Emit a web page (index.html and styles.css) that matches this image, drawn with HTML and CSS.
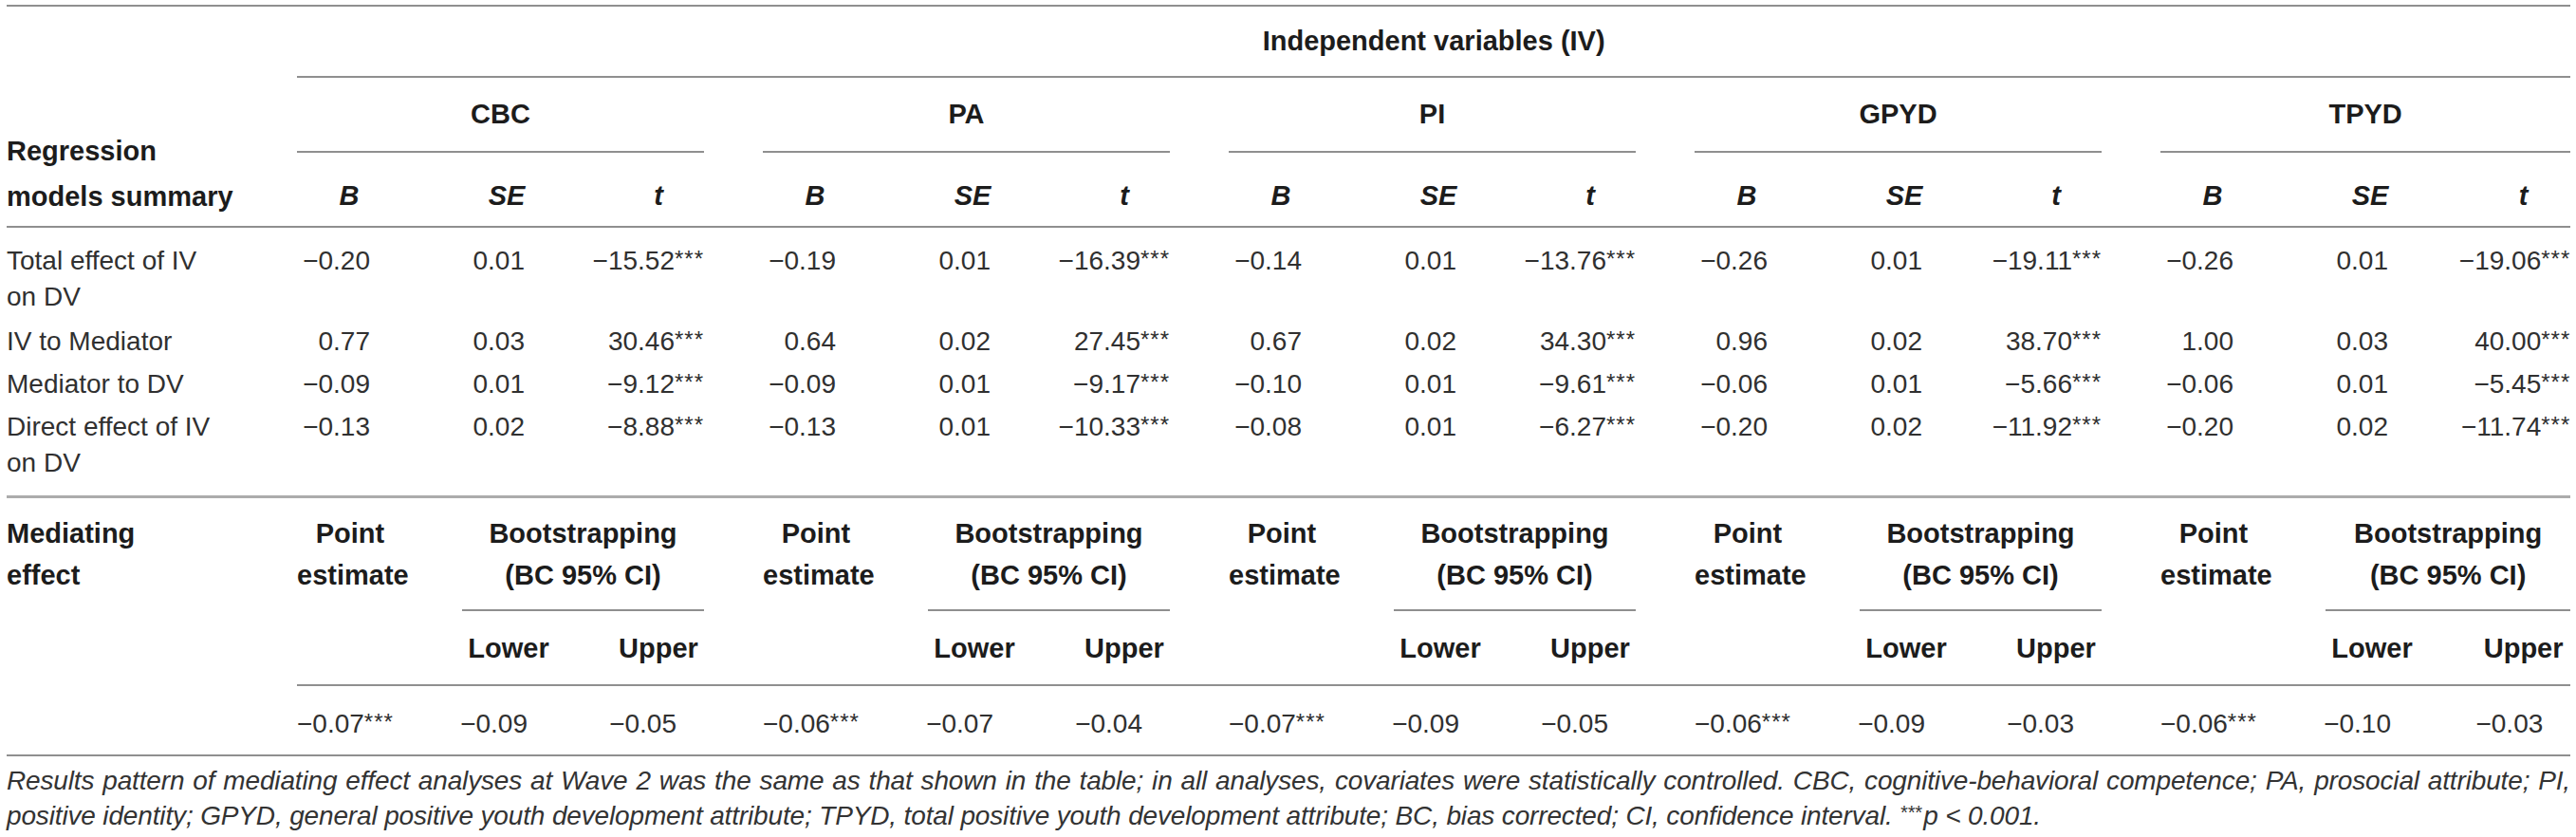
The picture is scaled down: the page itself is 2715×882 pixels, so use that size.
FILE: index.html
```html
<!DOCTYPE html>
<html lang="en">
<head>
  <meta charset="UTF-8">
  <meta name="viewport" content="width=device-width, initial-scale=1.0">
  <title>Mediating effect analyses</title>
  <link rel="stylesheet" href="styles.css">
</head>
<body>
  <table class="results">
    <colgroup>
      <col class="c-label">
      <col class="c-num"><col class="c-num"><col class="c-num"><col class="c-gap">
      <col class="c-num"><col class="c-num"><col class="c-num"><col class="c-gap">
      <col class="c-num"><col class="c-num"><col class="c-num"><col class="c-gap">
      <col class="c-num"><col class="c-num"><col class="c-num"><col class="c-gap">
      <col class="c-num"><col class="c-num"><col class="c-last">
    </colgroup>
    <thead>
      <tr class="iv-row">
        <th></th>
        <th colspan="19" class="iv">Independent variables (IV)</th>
      </tr>
      <tr class="grp-row">
        <th rowspan="2" class="rm">Regression<br>models summary</th>
        <th colspan="3" class="grp">CBC</th><th class="gap"></th>
        <th colspan="3" class="grp">PA</th><th class="gap"></th>
        <th colspan="3" class="grp">PI</th><th class="gap"></th>
        <th colspan="3" class="grp">GPYD</th><th class="gap"></th>
        <th colspan="3" class="grp">TPYD</th>
      </tr>
      <tr class="stat-row">
        <th class="h-b">B</th><th class="h-se">SE</th><th class="h-t">t</th><th class="gap"></th>
        <th class="h-b">B</th><th class="h-se">SE</th><th class="h-t">t</th><th class="gap"></th>
        <th class="h-b">B</th><th class="h-se">SE</th><th class="h-t">t</th><th class="gap"></th>
        <th class="h-b">B</th><th class="h-se">SE</th><th class="h-t">t</th><th class="gap"></th>
        <th class="h-b">B</th><th class="h-se">SE</th><th class="h-t">t</th>
      </tr>
    </thead>
    <tbody>
      <tr class="first">
        <td class="lbl">Total effect of IV<br>on DV</td>
        <td class="b">−0.20</td><td class="se">0.01</td><td class="t">−15.52<sup>***</sup></td><td class="gap"></td>
        <td class="b">−0.19</td><td class="se">0.01</td><td class="t">−16.39<sup>***</sup></td><td class="gap"></td>
        <td class="b">−0.14</td><td class="se">0.01</td><td class="t">−13.76<sup>***</sup></td><td class="gap"></td>
        <td class="b">−0.26</td><td class="se">0.01</td><td class="t">−19.11<sup>***</sup></td><td class="gap"></td>
        <td class="b">−0.26</td><td class="se">0.01</td><td class="t">−19.06<sup>***</sup></td>
      </tr>
      <tr>
        <td class="lbl">IV to Mediator</td>
        <td class="b">0.77</td><td class="se">0.03</td><td class="t">30.46<sup>***</sup></td><td class="gap"></td>
        <td class="b">0.64</td><td class="se">0.02</td><td class="t">27.45<sup>***</sup></td><td class="gap"></td>
        <td class="b">0.67</td><td class="se">0.02</td><td class="t">34.30<sup>***</sup></td><td class="gap"></td>
        <td class="b">0.96</td><td class="se">0.02</td><td class="t">38.70<sup>***</sup></td><td class="gap"></td>
        <td class="b">1.00</td><td class="se">0.03</td><td class="t">40.00<sup>***</sup></td>
      </tr>
      <tr>
        <td class="lbl">Mediator to DV</td>
        <td class="b">−0.09</td><td class="se">0.01</td><td class="t">−9.12<sup>***</sup></td><td class="gap"></td>
        <td class="b">−0.09</td><td class="se">0.01</td><td class="t">−9.17<sup>***</sup></td><td class="gap"></td>
        <td class="b">−0.10</td><td class="se">0.01</td><td class="t">−9.61<sup>***</sup></td><td class="gap"></td>
        <td class="b">−0.06</td><td class="se">0.01</td><td class="t">−5.66<sup>***</sup></td><td class="gap"></td>
        <td class="b">−0.06</td><td class="se">0.01</td><td class="t">−5.45<sup>***</sup></td>
      </tr>
      <tr class="last">
        <td class="lbl">Direct effect of IV<br>on DV</td>
        <td class="b">−0.13</td><td class="se">0.02</td><td class="t">−8.88<sup>***</sup></td><td class="gap"></td>
        <td class="b">−0.13</td><td class="se">0.01</td><td class="t">−10.33<sup>***</sup></td><td class="gap"></td>
        <td class="b">−0.08</td><td class="se">0.01</td><td class="t">−6.27<sup>***</sup></td><td class="gap"></td>
        <td class="b">−0.20</td><td class="se">0.02</td><td class="t">−11.92<sup>***</sup></td><td class="gap"></td>
        <td class="b">−0.20</td><td class="se">0.02</td><td class="t">−11.74<sup>***</sup></td>
      </tr>
      <tr class="med-head">
        <th class="lbl-b">Mediating<br>effect</th>
        <th class="pe">Point<br>estimate</th><th colspan="2" class="boot"><div class="boot-in">Bootstrapping<br>(BC 95% CI)</div></th><th class="gap"></th>
        <th class="pe">Point<br>estimate</th><th colspan="2" class="boot"><div class="boot-in">Bootstrapping<br>(BC 95% CI)</div></th><th class="gap"></th>
        <th class="pe">Point<br>estimate</th><th colspan="2" class="boot"><div class="boot-in">Bootstrapping<br>(BC 95% CI)</div></th><th class="gap"></th>
        <th class="pe">Point<br>estimate</th><th colspan="2" class="boot"><div class="boot-in">Bootstrapping<br>(BC 95% CI)</div></th><th class="gap"></th>
        <th class="pe">Point<br>estimate</th><th colspan="2" class="boot"><div class="boot-in">Bootstrapping<br>(BC 95% CI)</div></th>
      </tr>
      <tr class="ci-row">
        <th class="blank"></th>
        <th></th><th class="lo">Lower</th><th class="up">Upper</th><th class="gap"></th>
        <th></th><th class="lo">Lower</th><th class="up">Upper</th><th class="gap"></th>
        <th></th><th class="lo">Lower</th><th class="up">Upper</th><th class="gap"></th>
        <th></th><th class="lo">Lower</th><th class="up">Upper</th><th class="gap"></th>
        <th></th><th class="lo">Lower</th><th class="up">Upper</th>
      </tr>
      <tr class="med-row">
        <td></td>
        <td class="pv">−0.07<sup>***</sup></td><td class="lv">−0.09</td><td class="uv">−0.05</td><td class="gap"></td>
        <td class="pv">−0.06<sup>***</sup></td><td class="lv">−0.07</td><td class="uv">−0.04</td><td class="gap"></td>
        <td class="pv">−0.07<sup>***</sup></td><td class="lv">−0.09</td><td class="uv">−0.05</td><td class="gap"></td>
        <td class="pv">−0.06<sup>***</sup></td><td class="lv">−0.09</td><td class="uv">−0.03</td><td class="gap"></td>
        <td class="pv">−0.06<sup>***</sup></td><td class="lv">−0.10</td><td class="uv">−0.03</td>
      </tr>
    </tbody>
  </table>

  <p class="note">Results pattern of mediating effect analyses at Wave 2 was the same as that shown in the table; in all analyses, covariates were statistically controlled. CBC, cognitive-behavioral competence; PA, prosocial attribute; PI, positive identity; GPYD, general positive youth development attribute; TPYD, total positive youth development attribute; BC, bias corrected; CI, confidence interval. <span class="sig">***</span>p &lt; 0.001.</p>
</body>
</html>
```

FILE: styles.css
```css
* {
  box-sizing: border-box;
}

body {
  margin: 0;
  padding: 5px 6px 0 7px;
  background: #fff;
  color: #303030;
  font-family: "Liberation Sans", Arial, Helvetica, sans-serif;
}

th, td {
  padding: 0;
  vertical-align: top;
  white-space: nowrap;
}

.results {
  width: 2702px;
  table-layout: fixed;
  border-collapse: separate;
  border-spacing: 0;
  border-top: 2px solid #8f8f8f;
  border-bottom: 2px solid #8f8f8f;
  font-size: 28px;
  line-height: 38px;
}

.c-label { width: 306px; }
.c-num { width: 143px; }
.c-gap { width: 62px; }
.c-last { width: 146px; }

.results th {
  font-size: 29px;
  font-weight: bold;
  color: #1c1c1c;
  text-align: center;
}

/* header rows */
.iv {
  padding: 17px 0 18px;
  border-bottom: 2px solid #8f8f8f;
}

.grp-row th {
  padding: 19px 0 20px;
}

.grp {
  border-bottom: 2px solid #8f8f8f;
}

.grp-row .rm {
  text-align: left;
  vertical-align: bottom;
  line-height: 48px;
  padding: 0 0 7px;
  border-bottom: 2px solid #8f8f8f;
}

.stat-row th {
  padding: 26px 0 13px;
  font-style: italic;
  border-bottom: 2px solid #8f8f8f;
}

.stat-row .h-b { padding-right: 33px; }
.stat-row .h-se { padding-left: 13px; }
.stat-row .h-t { padding-left: 47px; }

/* body rows */
.results tbody td {
  padding-top: 5px;
  padding-bottom: 2px;
}

.results tbody tr.first td {
  padding-top: 16px;
  padding-bottom: 4px;
}

.results tbody tr.last td {
  padding-bottom: 15px;
  border-bottom: 3px solid #acacac;
}

.lbl {
  text-align: left;
}

.b, .se, .t {
  text-align: right;
}

.results td.b { padding-right: 66px; }
.results td.se { padding-right: 46px; }

sup {
  font-size: 24px;
  line-height: 0;
  vertical-align: 3px;
  letter-spacing: 1px;
}

/* mediating effect block */
.med-head th {
  line-height: 44px;
  padding: 15px 0 16px;
}

.med-head .lbl-b {
  text-align: left;
}

.med-head .pe {
  padding-right: 31px;
}

.med-head .boot {
  padding: 0;
}

.boot-in {
  margin-left: 31px;
  padding: 15px 0 14px;
  border-bottom: 2px solid #8f8f8f;
}

.ci-row th {
  padding: 20px 0 19px;
  border-bottom: 2px solid #8f8f8f;
}

.ci-row th.blank {
  border-bottom: none;
}

.ci-row .lo { padding-left: 17px; }
.ci-row .up { padding-left: 47px; }

.results tbody tr.med-row td {
  padding-top: 21px;
  padding-bottom: 13px;
}

.pv { text-align: left; }
.lv, .uv { text-align: right; }
.results td.lv { padding-right: 43px; }
.results td.uv { padding-right: 29px; }

.note {
  width: 2702px;
  margin: 7px 0 0;
  font-size: 28px;
  line-height: 37px;
  letter-spacing: -0.15px;
  font-style: italic;
  text-align: justify;
  color: #333;
}

.note .sig {
  font-size: 20px;
  vertical-align: top;
  line-height: 30px;
  margin-right: 2px;
}
```
